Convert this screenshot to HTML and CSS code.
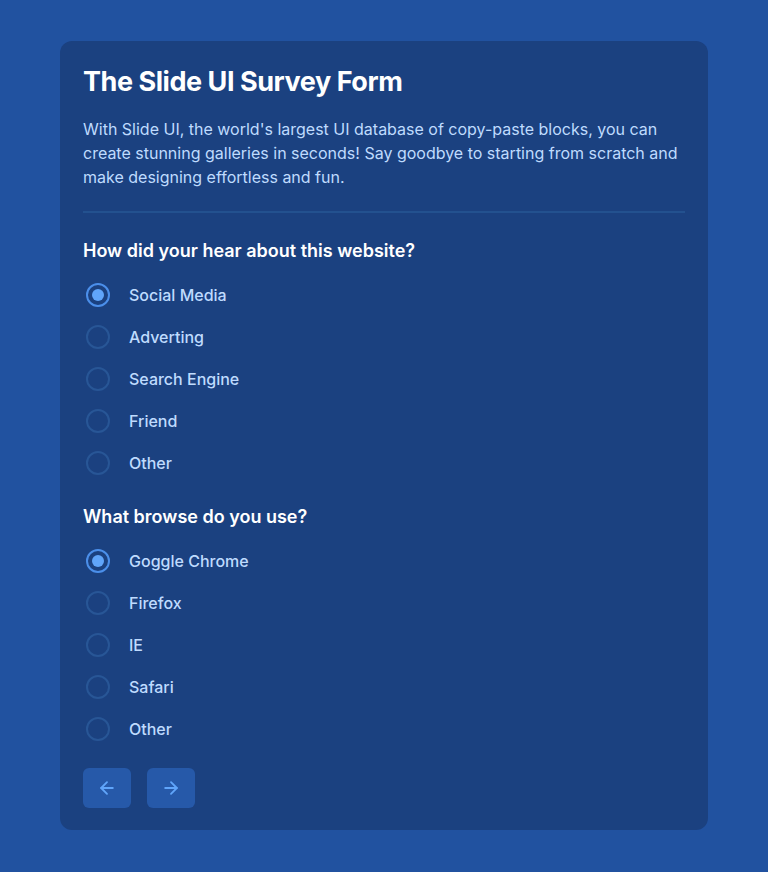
FILE: index.html
```html
<!DOCTYPE html>
<html lang="en">
<head>
<meta charset="utf-8">
<title>Survey</title>
<link rel="stylesheet" href="styles.css">
</head>
<body>
<main class="page">
  <form class="card">
    <h1 class="title">The Slide UI Survey Form</h1>
    <p class="desc">With Slide UI, the world's largest UI database of copy-paste blocks, you can create stunning galleries in seconds! Say goodbye to starting from scratch and make designing effortless and fun.</p>
    <hr class="divider">
    <div class="group" role="radiogroup">
      <h2 class="question">How did your hear about this website?</h2>
      <label class="option"><span class="radio checked"></span><span class="label">Social Media</span></label>
      <label class="option"><span class="radio"></span><span class="label">Adverting</span></label>
      <label class="option"><span class="radio"></span><span class="label">Search Engine</span></label>
      <label class="option"><span class="radio"></span><span class="label">Friend</span></label>
      <label class="option"><span class="radio"></span><span class="label">Other</span></label>
    </div>
    <div class="group second" role="radiogroup">
      <h2 class="question">What browse do you use?</h2>
      <label class="option"><span class="radio checked"></span><span class="label">Goggle Chrome</span></label>
      <label class="option"><span class="radio"></span><span class="label">Firefox</span></label>
      <label class="option"><span class="radio"></span><span class="label">IE</span></label>
      <label class="option"><span class="radio"></span><span class="label">Safari</span></label>
      <label class="option"><span class="radio"></span><span class="label">Other</span></label>
    </div>
    <div class="nav">
      <button type="button" class="btn" aria-label="Previous">
        <svg width="20" height="20" viewBox="0 0 24 24" fill="none" stroke="currentColor" stroke-width="2.2" stroke-linecap="round" stroke-linejoin="round"><path d="M19 12H5"/><path d="M12 19l-7-7 7-7"/></svg>
      </button>
      <button type="button" class="btn" aria-label="Next">
        <svg width="20" height="20" viewBox="0 0 24 24" fill="none" stroke="currentColor" stroke-width="2.2" stroke-linecap="round" stroke-linejoin="round"><path d="M5 12h14"/><path d="M12 5l7 7-7 7"/></svg>
      </button>
    </div>
  </form>
</main>
</body>
</html>
```
FILE: styles.css
```css
* { box-sizing: border-box; }
html, body { margin: 0; padding: 0; }
body {
  background: #2152a0;
  font-family: Inter, "Noto Sans", sans-serif;
  color: #bfdbfe;
  min-height: 872px;
}
.page {
  padding: 41px 60px 42px;
}
.card {
  background: #1b4180;
  border-radius: 12px;
  padding: 24px 23px 22px 23px;
  margin: 0;
}
.title {
  margin: 0;
  font-size: 27px;
  line-height: 34px;
  font-weight: 700;
  color: #ffffff;
  letter-spacing: -0.45px;
}
.desc {
  margin: 18px 0 0;
  font-size: 16px;
  line-height: 24px;
  color: #bfdbfe;
}
.divider {
  margin: 22px 0 0;
  border: 0;
  height: 2px;
  background: #23518f;
}
.group {
  display: flex;
  flex-direction: column;
  gap: 18px;
  padding-top: 24px;
}
.group.second { padding-top: 28px; }
.question {
  margin: 0;
  font-size: 18px;
  line-height: 28px;
  font-weight: 600;
  color: #ffffff;
}
.option {
  display: flex;
  align-items: center;
  gap: 19px;
  height: 24px;
}
.radio {
  width: 24px;
  height: 24px;
  border-radius: 50%;
  border: 2px solid #285696;
  margin-left: 3px;
  display: flex;
  align-items: center;
  justify-content: center;
  flex: none;
}
.radio.checked {
  border-color: #4b8fea;
}
.radio.checked::after {
  content: "";
  width: 12px;
  height: 12px;
  border-radius: 50%;
  background: #60a5fa;
}
.label {
  font-size: 16px;
  line-height: 24px;
  font-weight: 500;
  color: #bfdbfe;
}
.nav {
  display: flex;
  gap: 16px;
  margin-top: 27px;
}
.btn {
  width: 48px;
  height: 40px;
  border: 0;
  border-radius: 6px;
  background: #2659a9;
  color: #60a5fa;
  display: flex;
  align-items: center;
  justify-content: center;
  padding: 0;
}
```
